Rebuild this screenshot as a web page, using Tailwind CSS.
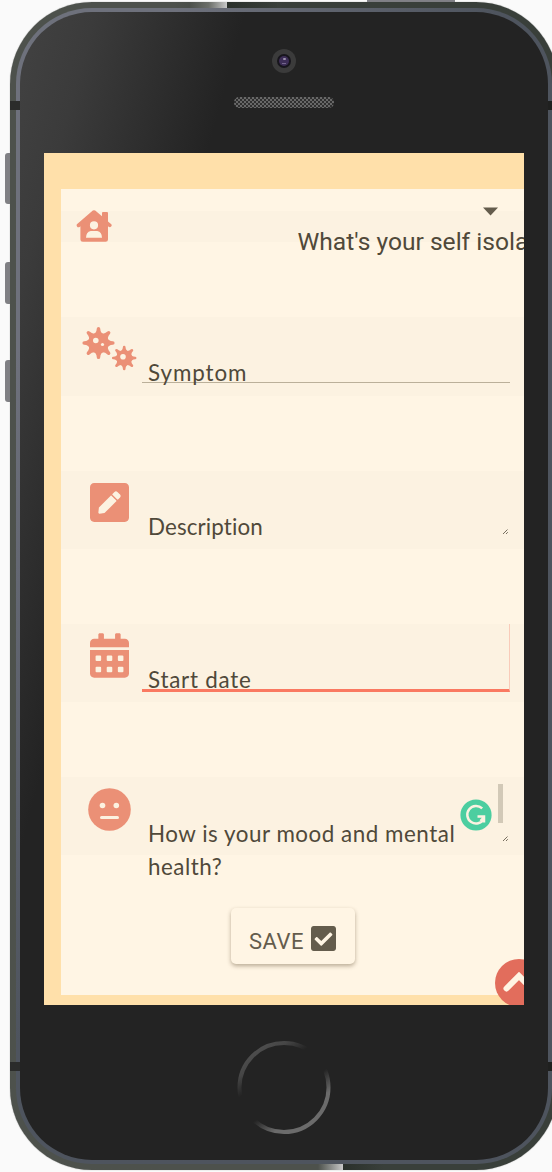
<!DOCTYPE html>
<html lang="en">
<head>
<meta charset="utf-8">
<title>Symptom tracker</title>
<script src="https://cdn.jsdelivr.net/npm/@tailwindcss/browser@4"></script>
</head>
<body class="relative h-[1172px] w-[552px] overflow-hidden bg-[#fafafa] font-['Lato','Open_Sans',sans-serif] text-[#50493a]">
<svg class="absolute h-0 w-0">
  <defs>
    <path id="spike" d="M-6-8Q-1.900-9.800-1.700-14.400A1.700 1.700 0 0 1 1.700-14.400Q1.900-9.800 6-8Z"/>
    <g id="germ"><circle r="10.3"/><use href="#spike"/><use href="#spike" transform="rotate(45)"/><use href="#spike" transform="rotate(90)"/><use href="#spike" transform="rotate(135)"/><use href="#spike" transform="rotate(180)"/><use href="#spike" transform="rotate(225)"/><use href="#spike" transform="rotate(270)"/><use href="#spike" transform="rotate(315)"/></g>
  </defs>
</svg>

<!-- hardware buttons -->
<div class="absolute top-0 left-[367px] h-[3px] w-[88px] bg-[#808086]"></div>
<div class="absolute top-[153px] left-[5px] h-[51px] w-[6px] rounded-l-[3px] bg-[#808084]"></div>
<div class="absolute top-[262px] left-[5px] h-[42px] w-[6px] rounded-l-[3px] bg-[#808084]"></div>
<div class="absolute top-[360px] left-[5px] h-[42px] w-[6px] rounded-l-[3px] bg-[#808084]"></div>

<div class="relative mt-[2px] ml-[10px] h-[1168px] w-[548px] overflow-hidden rounded-[82px] bg-linear-to-r from-[#4d514c] from-30% to-[#393f3a] to-50% p-[6px] shadow-[0_0_1px_#777]">
  <div class="absolute top-0 left-[180px] h-[6px] w-[37px] bg-linear-to-r from-[#4d514c] via-[#6b6e69] to-[#c8c8c8]"></div>
  <div class="absolute top-0 left-[217px] h-[6px] w-[50px] bg-linear-to-r from-[#2a302b] to-[#393f3a]"></div>
  <div class="absolute bottom-0 left-[150px] h-[6px] w-[162px] bg-[#4d514c]"></div>
  <div class="absolute bottom-0 left-[308px] h-[6px] w-[25px] bg-linear-to-r from-[#4d514c] to-[#c8c8c8]"></div>
  <div class="absolute bottom-0 left-[333px] h-[6px] w-[40px] bg-linear-to-r from-[#2a302b] to-[#393f3a]"></div>
  <div class="h-full rounded-[76px] bg-linear-to-br from-[#6e717c] from-15% to-[#4e545e] to-45% p-[4px]">
    <div class="flex h-full flex-col items-center rounded-[72px] bg-[#232323] bg-linear-[105deg,#424242_0%,#3b3b3b_9%,#232323_27%] pt-[37px]">
      <!-- camera -->
      <div class="flex h-[24px] w-[24px] shrink-0 items-center justify-center rounded-full bg-[#3b3b3b]">
        <div class="flex h-[14px] w-[14px] items-center justify-center rounded-full bg-[#17151c]">
          <div class="flex h-[10px] w-[10px] flex-col items-center justify-between rounded-full bg-[#3d2e57] py-[2px]"><i class="h-[2px] w-[3px] rounded-full bg-[#9d92ad]"></i><i class="h-[1px] w-[4px] bg-[#75668e]"></i></div>
        </div>
      </div>
      <!-- speaker -->
      <div class="mt-[24px] h-[11px] w-[100px] shrink-0 rounded-[5px] bg-[#292929] bg-[repeating-conic-gradient(#686868_0_25%,#303030_0_50%)] bg-[length:4px_4px]"></div>

      <main class="relative mt-[45px] h-[852px] w-[480px] shrink-0 overflow-hidden bg-[#ffe0aa] pt-[36px] pb-[10px] pl-[17px]">
        <div class="flex h-full flex-col bg-[#fff5e4] pt-[22px]">
          <section class="flex h-[31px] shrink-0 bg-[#fcf2e1] pl-[15px]">
            <svg class="-mt-px h-[32px] w-[36px] shrink-0" viewBox="0 0 36 32" fill="#eb9076"><path fill-rule="evenodd" d="M16.800.6Q18 0 19.200.6L26 6.200V3Q26 2 27 2H31Q32 2 32 3V11.500L35.300 14.300Q36.200 15.400 35.100 16.600Q34 17.800 32.600 16.800L32 16.300V29.400Q32 31.800 29.600 31.800H6.800Q4.400 31.800 4.400 29.400V16.200L3.600 16.900Q2.100 18 1 16.500Q.1 15.200 1.200 14.100ZM18 11.200A4.100 4.100 0 1 0 18 19.400A4.100 4.100 0 1 0 18 11.200M14.700 20.900Q10 22 10 27.800H26Q26 22 21.300 20.900Z"/></svg>
            <div class="ml-[185px] w-[280px] shrink-0">
              <svg class="-mt-[4px] ml-[185px] h-[9px] w-[17px]" viewBox="0 0 17 9"><path d="M1 .4H16L8.500 8.500Z" fill="#645c4c"/></svg>
              <p class="mt-[10px] ml-[.5px] font-['Roboto'] text-[24.6px] leading-[32px] whitespace-nowrap">What's your self isola</p>
            </div>
          </section>

          <section class="mt-[75px] flex h-[79px] shrink-0 bg-[#fcf2e1] pr-[14px]">
            <svg class="ml-[19px] h-[60px] w-[58px] shrink-0" viewBox="80 317 58 60"><g fill="#eb9076"><use href="#germ" transform="translate(98.500 343)"/><use href="#germ" transform="translate(124.200 358) scale(.76)"/></g><g fill="#fcf2e1"><circle cx="95.800" cy="340.500" r="2.800"/><circle cx="102.500" cy="344.500" r="1.600"/><circle cx="123" cy="356.800" r="2.800"/></g></svg>
            <div class="ml-[4px] flex h-[66px] grow items-end border-b border-[#bbb09a] pl-[6px]"><label class="-mb-[6px] text-[22.4px] leading-[30px] tracking-[.9px]">Symptom</label></div>
          </section>

          <section class="mt-[75px] flex h-[78px] shrink-0 bg-[#fcf2e1] pr-[14px]">
            <svg class="mt-[12px] ml-[29px] h-[39px] w-[39px] shrink-0" viewBox="0 32 448 448" fill="#eb9076"><path d="M400 480H48c-26.500 0-48-21.500-48-48V80c0-26.500 21.500-48 48-48h352c26.500 0 48 21.500 48 48v352c0 26.500-21.500 48-48 48zM238.100 177.900L102.400 313.600l-6.300 57.100c-.8 7.600 5.600 14.100 13.300 13.300l57.100-6.300L302.200 242c2.300-2.300 2.300-6.100 0-8.500L246.700 178c-2.500-2.400-6.300-2.400-8.600-.1zM345 165.100L314.900 135c-9.400-9.400-24.600-9.400-33.900 0l-23.100 23.100c-2.300 2.300-2.300 6.100 0 8.500l55.500 55.500c2.300 2.300 6.100 2.300 8.500 0L345 199c9.300-9.300 9.300-24.500 0-33.900z"/></svg>
            <div class="ml-[13px] flex h-[66px] grow items-end justify-between pl-[6px]"><label class="-mb-[5px] text-[22.4px] leading-[30px] tracking-[.12px] [font-variant-ligatures:none]">Description</label>
              <svg class="mr-px mb-[2px] h-[7px] w-[7px]" viewBox="0 0 7 7" stroke="#776f60" fill="none"><path d="M1 6L5.500 1.500M4 6L5.800 4.200"/></svg></div>
          </section>

          <section class="mt-[75px] flex h-[78px] shrink-0 bg-[#fcf2e1] pr-[14px]">
            <svg class="mt-[9px] ml-[29px] h-[45px] w-[39px] shrink-0" viewBox="0 0 448 512" fill="#eb9076"><path fill-rule="evenodd" d="M0 464c0 26.500 21.500 48 48 48h352c26.500 0 48-21.500 48-48V192H0ZM76 256h40q12 0 12 12v40q0 12-12 12h-40q-12 0-12-12v-40q0-12 12-12zm128 0h40q12 0 12 12v40q0 12-12 12h-40q-12 0-12-12v-40q0-12 12-12zm128 0h40q12 0 12 12v40q0 12-12 12h-40q-12 0-12-12v-40q0-12 12-12zM76 384h40q12 0 12 12v40q0 12-12 12h-40q-12 0-12-12v-40q0-12 12-12zm128 0h40q12 0 12 12v40q0 12-12 12h-40q-12 0-12-12v-40q0-12 12-12zm128 0h40q12 0 12 12v40q0 12-12 12h-40q-12 0-12-12v-40q0-12 12-12zM400 64h-48V16c0-8.800-7.200-16-16-16h-32c-8.800 0-16 7.200-16 16v48H160V16c0-8.800-7.200-16-16-16h-32c-8.800 0-16 7.200-16 16v48H48C21.500 64 0 85.500 0 112v48h448v-48c0-26.500-21.500-48-48-48z"/></svg>
            <div class="ml-[13px] flex h-[68px] grow items-end border-r border-b-[3px] border-r-[#f9cbb9] border-b-[#fa7961] pl-[6px]"><label class="-mb-[6px] text-[22.4px] leading-[30px] tracking-[.75px]">Start date</label></div>
          </section>

          <section class="mt-[75px] flex h-[78px] shrink-0 bg-[#fcf2e1] pr-[14px]">
            <svg class="mt-[10.5px] ml-[27px] h-[43px] w-[43px] shrink-0" viewBox="0 0 43 43"><circle cx="21.500" cy="21.500" r="21.300" fill="#eb9076"/><g fill="#fcf2e1"><circle cx="14.500" cy="17.500" r="2.800"/><circle cx="28.300" cy="17.500" r="2.800"/><rect x="12" y="28" width="19" height="3" rx="1.500"/></g></svg>
            <p class="mt-[40px] ml-[17px] w-[310px] shrink-0 text-[22.4px] leading-[33px] tracking-[.52px] whitespace-nowrap">How is your mood and mental<br>health?</p>
            <svg class="mt-[22px] ml-[2px] h-[32px] w-[32px] shrink-0" viewBox="0 0 32 32"><circle cx="16" cy="16" r="15.600" fill="#4ccea0"/><path d="M22.200 9.400A8.800 8.800 0 1 0 23.800 20M17.500 17.500H24V23.500M24 18L20.500 22" fill="none" stroke="#fcf2e1" stroke-width="2.500"/></svg>
            <div class="ml-[6px] flex w-[11px] shrink-0 flex-col"><i class="mt-[7px] h-[39px] w-[5px] bg-[#d2c9b7]"></i>
              <svg class="mt-[12px] ml-[4px] h-[7px] w-[7px]" viewBox="0 0 7 7" stroke="#776f60" fill="none"><path d="M1 6L5.500 1.500M4 6L5.800 4.200"/></svg></div>
          </section>

          <button class="mt-[53px] ml-[170px] flex h-[56px] w-[124px] shrink-0 items-center rounded-[5px] bg-[#fff5e4] pl-[18px] font-['Roboto'] text-[22px] tracking-[.5px] text-[#645c4c] shadow-[0_2px_4px_rgba(80,60,30,0.4)]"><span class="mt-[11px] w-[62px] text-left">SAVE</span><svg class="mt-[5px] h-[25px] w-[25px]" viewBox="0 32 448 448" fill="#645c4c"><path d="M400 480H48c-26.510 0-48-21.490-48-48V80c0-26.510 21.490-48 48-48h352c26.510 0 48 21.490 48 48v352c0 26.510-21.490 48-48 48zm-204.686-98.059l184-184c6.248-6.248 6.248-16.379 0-22.627l-22.627-22.627c-6.248-6.248-16.379-6.249-22.628 0L184 302.745l-70.059-70.059c-6.248-6.248-16.379-6.248-22.628 0l-22.627 22.627c-6.248 6.248-6.248 16.379 0 22.627l104 104c6.249 6.250 16.379 6.250 22.628.001z"/></svg></button>
        </div>
        <!-- scroll to top -->
        <div class="absolute top-[806px] left-[451px] h-[48px] w-[48px] rounded-full bg-[#e26d5c]"><svg class="h-full w-full" viewBox="0 0 48 48"><path d="M11.500 29.500L24 17L36.500 29.500" fill="none" stroke="#fff4e3" stroke-width="6" stroke-linecap="round"/></svg></div>
      </main>

      <!-- home button -->
      <svg class="mt-[36px] h-[94px] w-[94px] shrink-0" viewBox="0 0 94 94"><defs><linearGradient id="ring" x1=".19" y1=".08" x2=".81" y2=".93"><stop stop-color="#4d4d4d"/><stop offset=".12" stop-color="#464646"/><stop offset=".3" stop-color="#232323"/><stop offset=".6" stop-color="#232323"/><stop offset=".82" stop-color="#6b6b6b"/></linearGradient></defs><circle cx="47" cy="46.500" r="44.500" fill="none" stroke="url(#ring)" stroke-width="4"/></svg>
    </div>
  </div>
  <!-- antenna bands -->
  <div class="absolute top-[99px] left-0 h-[9px] w-[10px] bg-[#2b2c2b]"></div>
  <div class="absolute top-[99px] right-0 h-[9px] w-[10px] bg-[#1f201f]"></div>
  <div class="absolute top-[1060px] left-0 h-[9px] w-[10px] bg-[#2b2c2b]"></div>
  <div class="absolute top-[1060px] right-0 h-[9px] w-[10px] bg-[#1f201f]"></div>
</div>
</body>
</html>
